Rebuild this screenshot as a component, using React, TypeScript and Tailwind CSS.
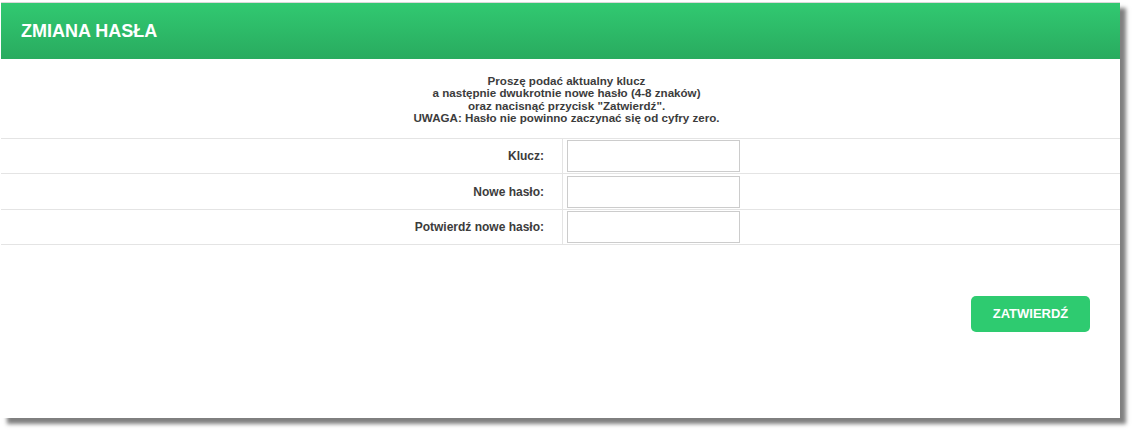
import React from "react";

const FIELDS = [
  { label: "Klucz:", h: "h-[35px]" },
  { label: "Nowe hasło:", h: "h-[36px]" },
  { label: "Potwierdź nowe hasło:", h: "h-[35px]" },
];

export default function App() {
  return (
    <div className="h-[433px] w-[1134px] bg-white pl-[1px] pt-[2px] font-['Liberation_Sans',Arial,sans-serif]">
      <div className="flex h-[416px] w-[1119px] flex-col border-t border-[#d9d9d9] bg-white shadow-[6px_6px_4px_rgba(0,0,0,0.5)]">
        <div className="flex h-[56px] items-center bg-gradient-to-b from-[#31c971] to-[#29ab5f] px-[20px]">
          <h1 className="text-[18px] font-bold text-white">ZMIANA HASŁA</h1>
        </div>

        <div className="flex h-[80px] flex-col items-center justify-center border-b border-[#e4e4e4] pl-[12px] pt-[2px] text-center text-[11.6px] font-bold leading-[12.4px] text-[#3c3c3c]">
          <p>Proszę podać aktualny klucz</p>
          <p>a następnie dwukrotnie nowe hasło (4-8 znaków)</p>
          <p>oraz nacisnąć przycisk "Zatwierdź".</p>
          <p>UWAGA: Hasło nie powinno zaczynać się od cyfry zero.</p>
        </div>

        {FIELDS.map((f) => (
          <div key={f.label} className={`flex ${f.h} border-b border-[#e4e4e4] text-[12px] font-bold text-[#3c3c3c]`}>
            <label className="flex w-[562px] items-center justify-end border-r border-[#e4e4e4] pr-[18px]">
              {f.label}
            </label>
            <div className="flex items-center pl-[4px]">
              <input
                type="password"
                className="h-[32px] w-[173px] border border-[#cccccc] bg-white outline-none"
              />
            </div>
          </div>
        ))}

        <div className="flex justify-end pr-[30px] pt-[51px]">
          <button className="h-[36px] w-[119px] rounded-[5px] bg-[#2ecb70] text-[13px] font-bold text-white">
            ZATWIERDŹ
          </button>
        </div>
      </div>
    </div>
  );
}
